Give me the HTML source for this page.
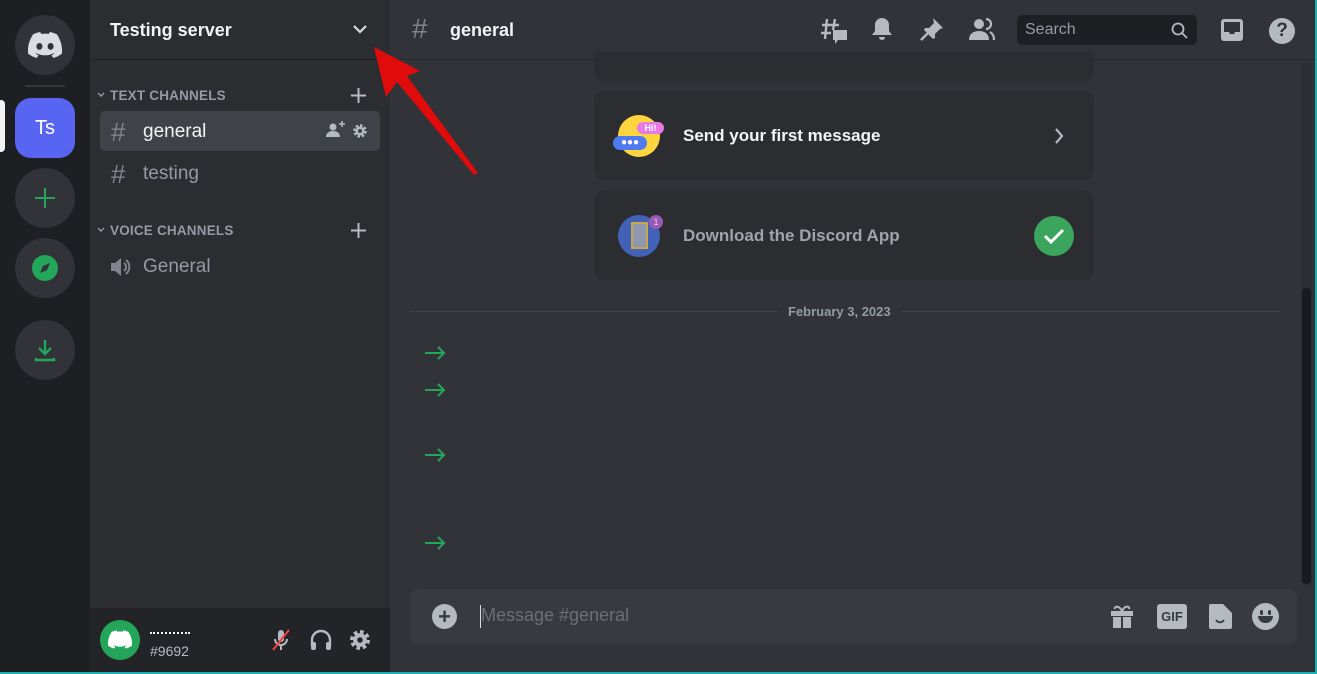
<!DOCTYPE html>
<html><head><meta charset="utf-8"><style>
*{box-sizing:border-box;margin:0;padding:0}
body{width:1317px;height:674px;overflow:hidden;background:#313338;font-family:"Liberation Sans",sans-serif;position:relative}
.abs{position:absolute}
.rail{left:0;top:0;width:90px;height:674px;background:#1e1f22}
.circ{position:absolute;left:15px;width:60px;height:60px;border-radius:50%;background:#313338;display:flex;align-items:center;justify-content:center}
.side{left:90px;top:0;width:300px;height:674px;background:#2b2d31}
.hdr{left:90px;top:0;width:300px;height:60px;border-bottom:1px solid #1f2023;color:#f2f3f5;font-weight:bold;font-size:18px;padding:20px 20px}
.cat{position:absolute;left:110px;font-size:13.5px;font-weight:bold;color:#949ba4;letter-spacing:.2px}
.chev{position:absolute;left:97px}
.ch{position:absolute;left:100px;width:280px;height:40px;border-radius:5px;font-size:19px;color:#949ba4;padding:10px 0 0 43px}
.ch .h{position:absolute;left:11px;top:6px;font-size:26px;color:#80848e}
.user{left:90px;top:608px;width:300px;height:66px;background:#232428}
.card{position:absolute;left:594px;width:500px;background:#2b2d31;border-radius:10px}
.mainhdr{left:390px;top:0;width:925px;height:60px;border-bottom:1px solid #26282c}
.ico{fill:#b5bac1}
.arr{position:absolute;left:424px}
</style></head><body>
<div class="abs rail"></div>
<div class="circ" style="top:15px"><svg width="34" height="26" viewBox="0 0 34 26"><path fill="#dbdee1" d="M28.8 2.2A28 28 0 0 0 21.8 0l-.9 1.9a26 26 0 0 0-7.8 0L12.2 0a28 28 0 0 0-7 2.2C.7 8.8-.5 15.3.1 21.7A28 28 0 0 0 8.7 26l1.8-2.9a18 18 0 0 1-2.9-1.4l.7-.5a20 20 0 0 0 17.4 0l.7.5a18 18 0 0 1-2.9 1.4l1.8 2.9a28 28 0 0 0 8.6-4.3c.7-7.4-1.2-13.9-5.1-19.5zM11.4 17.8c-1.7 0-3-1.5-3-3.4s1.3-3.4 3-3.4 3.1 1.5 3 3.4c0 1.9-1.3 3.4-3 3.4zm11.2 0c-1.7 0-3-1.5-3-3.4s1.3-3.4 3-3.4 3.1 1.5 3 3.4c0 1.9-1.3 3.4-3 3.4z"/></svg></div>
<div class="abs" style="left:25px;top:85px;width:40px;height:2px;background:#35363c"></div>
<div class="abs" style="left:0;top:100px;width:5px;height:52px;background:#f2f3f5;border-radius:0 4px 4px 0"></div>
<div class="circ" style="top:98px;border-radius:16px;background:#5865f2;color:#fff;font-size:20px">Ts</div>
<div class="circ" style="top:168px"><svg width="22" height="22" viewBox="0 0 22 22"><path d="M11 1v20M1 11h20" stroke="#23a55a" stroke-width="2"/></svg></div>
<div class="circ" style="top:238px"><svg width="26" height="26" viewBox="0 0 26 26"><circle cx="13" cy="13" r="13" fill="#23a55a"/><path d="M18 8l-3 7-7 3 3-7z" fill="#313338"/></svg></div>
<div class="circ" style="top:320px"><svg width="22" height="24" viewBox="0 0 22 24" fill="none" stroke="#23a55a" stroke-width="2.4"><path d="M11 2v13M5 10l6 6 6-6M2 20v2h18v-2"/></svg></div>

<div class="abs side"></div>
<div class="abs hdr">Testing server<svg style="position:absolute;right:23px;top:25px" width="14" height="9" viewBox="0 0 14 9"><path d="M1 1l6 6 6-6" stroke="#dbdee1" stroke-width="2.2" fill="none"/></svg></div>
<svg class="chev" style="top:92px" width="8" height="6" viewBox="0 0 8 6"><path d="M1 1l3 3 3-3" stroke="#949ba4" stroke-width="1.4" fill="none"/></svg>
<div class="cat" style="top:88px">TEXT CHANNELS</div>
<svg class="abs" style="left:351px;top:88px" width="15" height="15" viewBox="0 0 15 15"><path d="M7.5 0v15M0 7.5h15" stroke="#b5bac1" stroke-width="2"/></svg>
<div class="ch" style="top:111px;background:#404249;color:#f2f3f5"><span class="h">#</span>general
<svg style="position:absolute;left:226px;top:10px" width="20" height="17" viewBox="0 0 20 17"><circle cx="7" cy="6" r="3.5" fill="#b5bac1"/><path d="M0 16c0-4 3-6 7-6s7 2 7 6z" fill="#b5bac1"/><path d="M16 0v6M13 3h6" stroke="#b5bac1" stroke-width="1.5"/></svg>
<svg style="position:absolute;left:252px;top:12px" width="16" height="16" viewBox="0 0 16 16"><circle cx="8" cy="8" r="5" fill="none" stroke="#b5bac1" stroke-width="3.5" stroke-dasharray="2.3 1.6"/><circle cx="8" cy="8" r="4.5" fill="#b5bac1"/><circle cx="8" cy="8" r="2" fill="#404249"/></svg></div>
<div class="ch" style="top:153px"><span class="h">#</span>testing</div>
<svg class="chev" style="top:227px" width="8" height="6" viewBox="0 0 8 6"><path d="M1 1l3 3 3-3" stroke="#949ba4" stroke-width="1.4" fill="none"/></svg>
<div class="cat" style="top:223px">VOICE CHANNELS</div>
<svg class="abs" style="left:351px;top:223px" width="15" height="15" viewBox="0 0 15 15"><path d="M7.5 0v15M0 7.5h15" stroke="#b5bac1" stroke-width="2"/></svg>
<div class="ch" style="top:246px"><svg class="h" style="top:11px" width="22" height="20" viewBox="0 0 22 20"><path fill="#80848e" d="M0 6h4l6-5v18l-6-5H0z"/><path d="M13 6a5 5 0 0 1 0 8M15 3a9 9 0 0 1 0 14" stroke="#80848e" stroke-width="2" fill="none"/></svg>General</div>

<div class="abs user"></div>
<div class="abs" style="left:100px;top:620px;width:40px;height:40px;border-radius:50%;background:#23a55a"><svg style="margin:10px 8px" width="24" height="19" viewBox="0 0 34 26"><path fill="#fff" d="M28.8 2.2A28 28 0 0 0 21.8 0l-.9 1.9a26 26 0 0 0-7.8 0L12.2 0a28 28 0 0 0-7 2.2C.7 8.8-.5 15.3.1 21.7A28 28 0 0 0 8.7 26l1.8-2.9a18 18 0 0 1-2.9-1.4l.7-.5a20 20 0 0 0 17.4 0l.7.5a18 18 0 0 1-2.9 1.4l1.8 2.9a28 28 0 0 0 8.6-4.3c.7-7.4-1.2-13.9-5.1-19.5z"/></svg></div>
<div class="abs" style="left:150px;top:632px;width:40px;height:3px;border-top:2px dotted #f2f3f5"></div>
<div class="abs" style="left:150px;top:643px;color:#b5bac1;font-size:14px">#9692</div>
<svg class="abs" style="left:270px;top:628px" width="22" height="24" viewBox="0 0 22 24"><rect x="8" y="2" width="6" height="12" rx="3" fill="#b5bac1"/><path d="M5 11a6 6 0 0 0 12 0M11 17v5" stroke="#b5bac1" stroke-width="2" fill="none"/><path d="M3 22L19 2" stroke="#f23f43" stroke-width="2"/></svg>
<svg class="abs" style="left:309px;top:628px" width="24" height="24" viewBox="0 0 24 24"><path d="M3 18v-6a9 9 0 0 1 18 0v6" stroke="#b5bac1" stroke-width="2.4" fill="none"/><rect x="2" y="14" width="5" height="8" rx="2" fill="#b5bac1"/><rect x="17" y="14" width="5" height="8" rx="2" fill="#b5bac1"/></svg>
<svg class="abs" style="left:349px;top:629px" width="22" height="22" viewBox="0 0 16 16"><circle cx="8" cy="8" r="5.5" fill="none" stroke="#b5bac1" stroke-width="3.5" stroke-dasharray="2.4 1.9"/><circle cx="8" cy="8" r="5" fill="#b5bac1"/><circle cx="8" cy="8" r="2" fill="#232428"/></svg>

<div class="abs mainhdr"></div>
<div class="abs" style="left:412px;top:13px;color:#80848e;font-size:28px">#</div>
<div class="abs" style="left:450px;top:20px;color:#f2f3f5;font-weight:bold;font-size:18px">general</div>
<svg class="abs" style="left:820px;top:17px" width="28" height="28" viewBox="0 0 28 28"><path d="M7 2L5 22M15 2L13 13M2 8h17M1 16h10" stroke="#b5bac1" stroke-width="2.4" fill="none"/><path class="ico" d="M13 13h14v10h-9l-3 4v-4h-2z"/></svg>
<svg class="abs" style="left:870px;top:16px" width="24" height="26" viewBox="0 0 24 26"><path class="ico" d="M12 2a7 7 0 0 0-7 7v6l-3 4h20l-3-4V9a7 7 0 0 0-7-7zM9 21h6a3 3 0 0 1-6 0z"/></svg>
<svg class="abs" style="left:919px;top:16px" width="26" height="26" viewBox="0 0 26 26"><path class="ico" d="M14 2l10 10-3 1-5 5 0 4-2 1-9-9 1-2h4l5-5z"/><path d="M9 17l-7 7" stroke="#b5bac1" stroke-width="2.5"/></svg>
<svg class="abs" style="left:968px;top:16px" width="28" height="26" viewBox="0 0 28 26"><circle class="ico" cx="11" cy="8" r="5"/><path class="ico" d="M1 24c0-6 4-9 10-9s10 3 10 9z"/><path d="M18 3a5 5 0 0 1 0 10M22 16c3 2 4 4 4 8" stroke="#b5bac1" stroke-width="2.2" fill="none"/></svg>
<div class="abs" style="left:1017px;top:15px;width:180px;height:30px;background:#1e1f22;border-radius:5px;color:#949ba4;font-size:16px;padding:6px 8px">Search<svg style="position:absolute;right:9px;top:7px" width="17" height="17" viewBox="0 0 17 17"><circle cx="7" cy="7" r="5.5" stroke="#b5bac1" stroke-width="1.8" fill="none"/><path d="M11 11l5 5" stroke="#b5bac1" stroke-width="1.8"/></svg></div>
<svg class="abs" style="left:1220px;top:18px" width="24" height="24" viewBox="0 0 24 24"><rect x="1" y="1" width="22" height="22" rx="3" fill="#b5bac1"/><path d="M4 4h16v10h-5l-1 2h-4l-1-2H4z" fill="#313338"/></svg>
<div class="abs" style="left:1269px;top:18px;width:26px;height:26px;border-radius:50%;background:#b5bac1;color:#313338;font-weight:bold;font-size:19px;text-align:center;line-height:26px">?</div>

<div class="card" style="top:52px;height:29px;border-radius:0 0 10px 10px"></div>
<div class="card" style="top:91px;height:89px">
 <div class="abs" style="left:24px;top:24px;width:42px;height:42px;border-radius:50%;background:#fcd53f"></div>
 <div class="abs" style="left:43px;top:31px;width:27px;height:12px;border-radius:6px;background:#e879e6;color:#fff;font-size:9px;font-weight:bold;text-align:center;line-height:12px">Hi!</div>
 <div class="abs" style="left:19px;top:45px;width:34px;height:14px;border-radius:7px;background:#4f7bf0;color:#fff;font-size:10px;line-height:14px;text-align:center">●●●</div>
 <div class="abs" style="left:89px;top:35px;color:#f2f3f5;font-weight:bold;font-size:17px">Send your first message</div>
 <svg class="abs" style="left:460px;top:37px" width="10" height="16" viewBox="0 0 10 16"><path d="M2 1l6 7-6 7" stroke="#b5bac1" stroke-width="2.2" fill="none"/></svg>
</div>
<div class="card" style="top:191px;height:89px">
 <div class="abs" style="left:24px;top:24px;width:42px;height:42px;border-radius:50%;background:#4262b8"></div>
 <div class="abs" style="left:37px;top:31px;width:17px;height:27px;border:2px solid #c9a648;background:#8e99b0"></div>
 <div class="abs" style="left:55px;top:24px;width:14px;height:14px;border-radius:50%;background:#9b59b6;color:#ddd;font-size:9px;text-align:center;line-height:14px">1</div>
 <div class="abs" style="left:89px;top:35px;color:#a0a4aa;font-weight:bold;font-size:17px">Download the Discord App</div>
 <div class="abs" style="left:440px;top:25px;width:40px;height:40px;border-radius:50%;background:#3ba55d"><svg style="margin:11px 9px" width="22" height="18" viewBox="0 0 22 18"><path d="M2 9l6 6L20 3" stroke="#fff" stroke-width="3" fill="none"/></svg></div>
</div>
<div class="abs" style="left:410px;top:311px;width:870px;height:1px;background:#3f4147"></div>
<div class="abs" style="left:778px;top:304px;padding:0 10px;background:#313338;color:#949ba4;font-size:13px;font-weight:bold">February 3, 2023</div>
<svg class="arr" style="top:346px" width="22" height="14" viewBox="0 0 22 14"><path d="M1 7h19M14 1l6 6-6 6" stroke="#23a55a" stroke-width="2" fill="none"/></svg>
<svg class="arr" style="top:383px" width="22" height="14" viewBox="0 0 22 14"><path d="M1 7h19M14 1l6 6-6 6" stroke="#23a55a" stroke-width="2" fill="none"/></svg>
<svg class="arr" style="top:448px" width="22" height="14" viewBox="0 0 22 14"><path d="M1 7h19M14 1l6 6-6 6" stroke="#23a55a" stroke-width="2" fill="none"/></svg>
<svg class="arr" style="top:536px" width="22" height="14" viewBox="0 0 22 14"><path d="M1 7h19M14 1l6 6-6 6" stroke="#23a55a" stroke-width="2" fill="none"/></svg>
<div class="abs" style="left:1301px;top:62px;width:11px;height:524px;background:#2b2d31;border-radius:6px"></div>
<div class="abs" style="left:1302px;top:288px;width:9px;height:296px;background:#1a1b1e;border-radius:5px"></div>

<div class="abs" style="left:410px;top:589px;width:887px;height:55px;background:#383a40;border-radius:8px"></div>
<div class="abs" style="left:432px;top:604px;width:25px;height:25px;border-radius:50%;background:#b5bac1;color:#383a40;font-weight:bold;font-size:22px;text-align:center;line-height:25px">+</div>
<div class="abs" style="left:480px;top:605px;width:1px;height:23px;background:#dbdee1"></div>
<div class="abs" style="left:481px;top:605px;color:#6d6f78;font-size:18px">Message #general</div>
<svg class="abs" style="left:1109px;top:603px" width="26" height="26" viewBox="0 0 26 26"><path class="ico" d="M2 8h22v5H2zM4 14h8v11H4zM14 14h8v11h-8z"/><path d="M13 8c-3-6-8-5-7-2M13 8c3-6 8-5 7-2" stroke="#b5bac1" stroke-width="2" fill="none"/></svg>
<div class="abs" style="left:1157px;top:604px;width:30px;height:25px;background:#b5bac1;border-radius:3px;color:#383a40;font-weight:bold;font-size:13px;text-align:center;line-height:25px">GIF</div>
<svg class="abs" style="left:1207px;top:603px" width="26" height="27" viewBox="0 0 26 27"><path class="ico" d="M2 3a2 2 0 0 1 2-2h12l9 9v14a2 2 0 0 1-2 2H4a2 2 0 0 1-2-2z"/><path d="M9 17c2 3 6 3 8 0" stroke="#383a40" stroke-width="2" fill="none"/></svg>
<div class="abs" style="left:1252px;top:603px;width:27px;height:27px;border-radius:50%;background:#b5bac1"><div style="position:absolute;left:6px;top:13px;width:15px;height:7px;background:#383a40;border-radius:0 0 8px 8px"></div><div style="position:absolute;left:8px;top:7px;width:3px;height:5px;background:#383a40;border-radius:2px"></div><div style="position:absolute;left:16px;top:7px;width:3px;height:5px;background:#383a40;border-radius:2px"></div></div>

<svg class="abs" style="left:0;top:0" width="1317" height="674"><path d="M374 47L420 71 407 76 478 173 474 175 397 82 386 97z" fill="#e00b0b"/></svg>
<div class="abs" style="left:1315px;top:0;width:2px;height:674px;background:#1ab0b0"></div>
<div class="abs" style="left:0;top:672px;width:1317px;height:2px;background:#1ab0b0"></div>
</body></html>
